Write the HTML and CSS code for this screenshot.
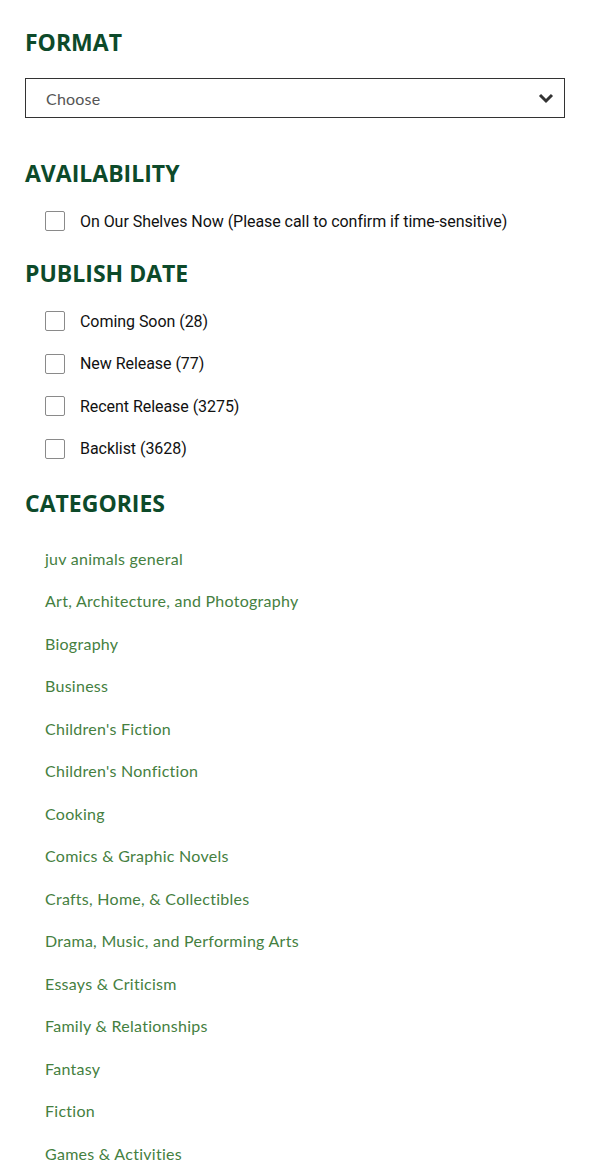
FILE: index.html
```html
<!DOCTYPE html>
<html>
<head>
<meta charset="utf-8">
<link rel="stylesheet" href="styles.css">
</head>
<body>
<aside class="filters">
  <section class="filter filter-format">
    <h2 class="filter-title">FORMAT</h2>
    <div class="select">
      <span class="select-value">Choose</span>
      <svg class="select-chevron" width="16" height="12" viewBox="0 0 16 12"><path d="M2 3 L8 9 L14 3" fill="none" stroke="#333" stroke-width="3"/></svg>
    </div>
  </section>

  <section class="filter filter-availability">
    <h2 class="filter-title">AVAILABILITY</h2>
    <ul class="checks">
      <li class="check"><span class="box"></span><span class="check-label">On Our Shelves Now (Please call to confirm if time-sensitive)</span></li>
    </ul>
  </section>

  <section class="filter filter-date">
    <h2 class="filter-title">PUBLISH DATE</h2>
    <ul class="checks">
      <li class="check"><span class="box"></span><span class="check-label">Coming Soon (28)</span></li>
      <li class="check"><span class="box"></span><span class="check-label">New Release (77)</span></li>
      <li class="check"><span class="box"></span><span class="check-label">Recent Release (3275)</span></li>
      <li class="check"><span class="box"></span><span class="check-label">Backlist (3628)</span></li>
    </ul>
  </section>

  <section class="filter filter-categories">
    <h2 class="filter-title">CATEGORIES</h2>
    <ul class="cats">
      <li><a href="#">juv animals general</a></li>
      <li><a href="#">Art, Architecture, and Photography</a></li>
      <li><a href="#">Biography</a></li>
      <li><a href="#">Business</a></li>
      <li><a href="#">Children's Fiction</a></li>
      <li><a href="#">Children's Nonfiction</a></li>
      <li><a href="#">Cooking</a></li>
      <li><a href="#">Comics &amp; Graphic Novels</a></li>
      <li><a href="#">Crafts, Home, &amp; Collectibles</a></li>
      <li><a href="#">Drama, Music, and Performing Arts</a></li>
      <li><a href="#">Essays &amp; Criticism</a></li>
      <li><a href="#">Family &amp; Relationships</a></li>
      <li><a href="#">Fantasy</a></li>
      <li><a href="#">Fiction</a></li>
      <li><a href="#">Games &amp; Activities</a></li>
    </ul>
  </section>
</aside>
</body>
</html>
```

FILE: styles.css
```css
html, body {
  margin: 0;
  padding: 0;
  background: #fff;
}

.filters {
  padding: 27px 25px 0 25px;
  font-family: "Open Sans", "Liberation Sans", sans-serif;
}

.filter-title {
  margin: 0;
  font-family: "Open Sans", sans-serif;
  font-weight: 700;
  font-size: 23px;
  line-height: 30px;
  color: #0d4a2a;
  letter-spacing: 0;
}

.filter-format .filter-title {
  margin-bottom: 21px;
}

.select {
  box-sizing: border-box;
  height: 40px;
  border: 1px solid #333;
  display: flex;
  align-items: center;
  justify-content: space-between;
  padding: 0 10px 0 20px;
}

.select-value {
  font-family: "Lato", sans-serif;
  font-size: 16px;
  letter-spacing: 0.2px;
  color: #555;
}

.filter-availability {
  margin-top: 40px;
}

.filter-date {
  margin-top: 27px;
}

.filter-categories {
  margin-top: 29px;
}

.checks {
  list-style: none;
  margin: 23px 0 0 0;
  padding: 0 0 0 20px;
  display: flex;
  flex-direction: column;
  gap: 22.5px;
}

.check {
  display: flex;
  align-items: center;
  gap: 15px;
  height: 20px;
}

.box {
  box-sizing: border-box;
  width: 20px;
  height: 20px;
  border: 1px solid #8a8a8a;
  border-radius: 2px;
  flex: none;
}

.check-label {
  font-family: "Roboto", sans-serif;
  font-size: 16px;
  letter-spacing: -0.05px;
  color: #111;
}

.cats {
  list-style: none;
  margin: 20px 0 0 0;
  padding: 0 0 0 20px;
}

.cats li {
  height: 42.5px;
  line-height: 42.5px;
}

.cats a {
  font-family: "Lato", sans-serif;
  font-size: 16px;
  letter-spacing: 0.27px;
  color: #45803f;
  text-decoration: none;
}
```
